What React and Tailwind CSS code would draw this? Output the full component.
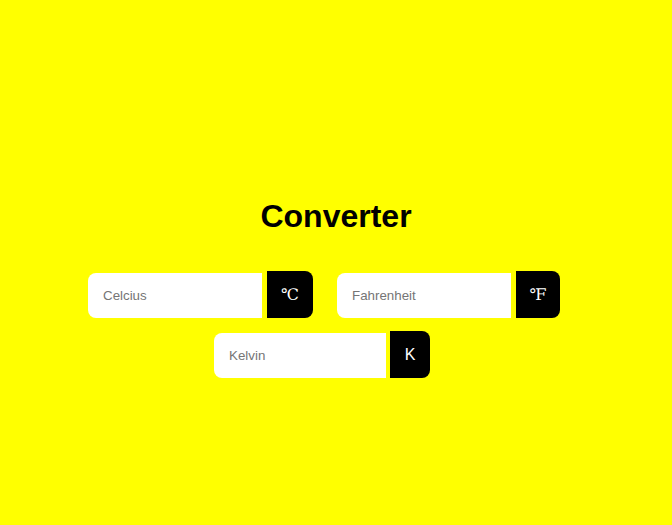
export default function App() {
  const rows = [
    {
      mr: "mr-6",
      items: [
        { ph: "Celcius", unit: "℃", serif: true, bw: "w-[46px]", iw: "w-[174px]", gap: "ml-[5px]" },
        { ph: "Fahrenheit", unit: "℉", serif: true, bw: "w-[44px]", iw: "w-[174px]", gap: "ml-[5px]" },
      ],
    },
    {
      mr: "mr-[28px]",
      items: [{ ph: "Kelvin", unit: "K", serif: false, bw: "w-[40px]", iw: "w-[172px]", gap: "ml-[4px]" }],
    },
  ];
  return (
    <div
      className="min-h-screen w-full bg-[#ffff00] pt-[198px]"
      style={{ fontFamily: '"Liberation Sans", Arial, sans-serif' }}
    >
      <h1 className="text-center text-[32px] font-bold leading-[37px] text-black">
        Converter
      </h1>
      <div className="mt-[36px] flex flex-col gap-[13px]">
        {rows.map((row, i) => (
          <div key={i} className="flex justify-center">
            {row.items.map((g) => (
              <div key={g.ph} className={row.mr + " flex items-end"}>
                <input
                  type="text"
                  placeholder={g.ph}
                  className={
                    g.iw +
                    " h-[45px] rounded-l-[8px] bg-white pl-[15px] text-[13.33px] text-black outline-none placeholder:text-[#757575]"
                  }
                />
                <button
                  className={
                    g.bw +
                    " " +
                    g.gap +
                    " flex h-[47px] items-center justify-center rounded-r-[8px] bg-black text-[16px] text-white " +
                    (g.serif ? "font-['DejaVu_Serif',serif] text-[15px]" : "")
                  }
                >
                  {g.unit}
                </button>
              </div>
            ))}
          </div>
        ))}
      </div>
    </div>
  );
}
